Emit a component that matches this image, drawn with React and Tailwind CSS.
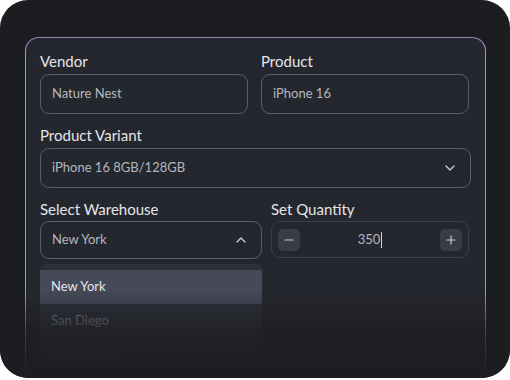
import React from 'react';
import { ChevronDown, ChevronUp, Minus, Plus } from 'lucide-react';

const font = { fontFamily: 'Lato, "Noto Sans", sans-serif' };

function Field({ label, value, className = '' }) {
  return (
    <div className={className}>
      <div className="text-[15px] leading-[18px] text-[#e4e5ea]">{label}</div>
      <div className="mt-[4px] h-[40px] flex items-center px-[11px] rounded-[9px] border border-[#5b5f6d] text-[13px] text-[#b4b7c0]">
        {value}
      </div>
    </div>
  );
}

export default function App() {
  return (
    <div className="w-[510px] h-[380px] bg-white" style={font}>
      <div className="relative w-[510px] h-[378px] rounded-[28px] bg-[#1c1d21] overflow-hidden pt-[37px] px-[25px]">
        <div className="w-[461px] h-[360px] rounded-[14px] border border-[#a98fe0] border-t-[#8f8aa9] bg-[#25272e] px-[14px] pt-[14px]">
          <div className="flex gap-[13px]">
            <Field label="Vendor" value="Nature Nest" className="w-[208px]" />
            <Field label="Product" value="iPhone 16" className="w-[208px]" />
          </div>

          <div className="mt-[12px]">
            <div className="text-[15px] leading-[18px] text-[#e4e5ea]">Product Variant</div>
            <div className="mt-[4px] h-[40px] flex items-center justify-between px-[11px] pr-[12px] rounded-[9px] border border-[#5b5f6d] text-[13px] text-[#b4b7c0]">
              <span>iPhone 16 8GB/128GB</span>
              <ChevronDown className="w-[16px] h-[16px] text-[#c9cbd2]" strokeWidth={2} />
            </div>
          </div>

          <div className="mt-[12px] flex gap-[9px]">
            <div className="w-[222px]">
              <div className="text-[15px] leading-[18px] text-[#e4e5ea]">Select Warehouse</div>
              <div className="mt-[3px] h-[38px] flex items-center justify-between px-[11px] pr-[12px] rounded-[9px] border border-[#5b5f6d] text-[13px] text-[#b4b7c0]">
                <span>New York</span>
                <ChevronUp className="w-[16px] h-[16px] text-[#c9cbd2]" strokeWidth={2} />
              </div>
              <div className="mt-[5px] rounded-t-[7px] bg-[#2e3039] pt-[6px]">
                <div className="h-[34px] flex items-center px-[11px] bg-[#464957] text-[13px] text-[#e6e7ec]">New York</div>
                <div className="h-[34px] flex items-center px-[11px] text-[13px] text-[#80838e]">San Diego</div>
                <div className="h-[34px] flex items-center px-[11px] text-[13px] text-[#4a4d56]">Los Angeles</div>
              </div>
            </div>
            <div className="w-[198px]">
              <div className="text-[15px] leading-[18px] text-[#e4e5ea]">Set Quantity</div>
              <div className="mt-[3px] h-[37px] flex items-center justify-between px-[6px] rounded-[9px] border border-[#3b3e48] text-[13px] text-[#b4b7c0]">
                <div className="w-[22px] h-[22px] rounded-[5px] bg-[#393c46] flex items-center justify-center">
                  <Minus className="w-[14px] h-[14px] text-[#c9cbd2]" strokeWidth={2} />
                </div>
                <div className="flex items-center">
                  <span>350</span>
                  <span className="ml-[1px] w-px h-[16px] bg-[#d0d2d8]" />
                </div>
                <div className="w-[22px] h-[22px] rounded-[5px] bg-[#393c46] flex items-center justify-center">
                  <Plus className="w-[14px] h-[14px] text-[#c9cbd2]" strokeWidth={2} />
                </div>
              </div>
            </div>
          </div>
        </div>
        <div className="absolute left-0 right-0 bottom-0 h-[88px] bg-gradient-to-b from-[#1c1d21]/0 via-[#1c1d21]/75 to-[#1c1d21]" />
      </div>
    </div>
  );
}
